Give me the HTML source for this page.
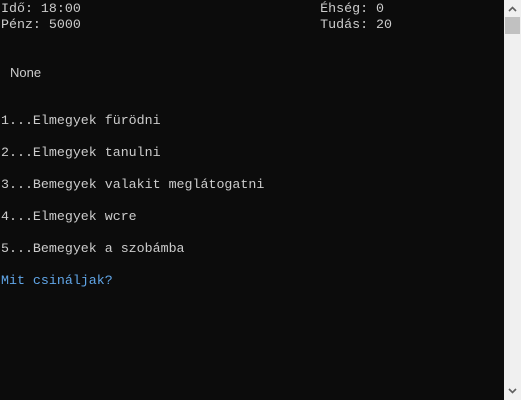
<!DOCTYPE html>
<html><head><meta charset="utf-8"><style>
html,body{margin:0;padding:0;background:#0c0c0c;width:521px;height:400px;overflow:hidden}
.c{position:absolute;left:1px;top:1px;width:503px;height:399px;font-family:"Liberation Mono",monospace;font-size:13.3px;color:#cccccc;}
.l{position:absolute;left:0;height:16px;line-height:16px;white-space:pre}
.sb{position:absolute;left:504px;top:0;width:17px;height:400px;background:#f0f0f0}
.th{position:absolute;left:505px;top:17px;width:15px;height:17px;background:#c1c1c1}
</style></head><body>
<div class="c">
<div class="l" style="top:0">Idő: 18:00                              Éhség: 0</div>
<div class="l" style="top:16px">Pénz: 5000                              Tudás: 20</div>
<div class="l" style="top:64px;font-family:'Liberation Sans',sans-serif;font-size:13px;left:9px">None</div>
<div class="l" style="top:112px">1...Elmegyek fürödni</div>
<div class="l" style="top:144px">2...Elmegyek tanulni</div>
<div class="l" style="top:176px">3...Bemegyek valakit meglátogatni</div>
<div class="l" style="top:208px">4...Elmegyek wcre</div>
<div class="l" style="top:240px">5...Bemegyek a szobámba</div>
<div class="l" style="top:272px;color:#61a6e8">Mit csináljak?</div>
</div>
<div class="sb"></div>
<div class="th"></div>
<svg style="position:absolute;left:504px;top:0" width="17" height="400">
<path d="M5 11 L8.5 7.5 L12 11" fill="none" stroke="#606060" stroke-width="1.6"/>
<path d="M5 389 L8.5 392.5 L12 389" fill="none" stroke="#606060" stroke-width="1.6"/>
</svg>
</body></html>
